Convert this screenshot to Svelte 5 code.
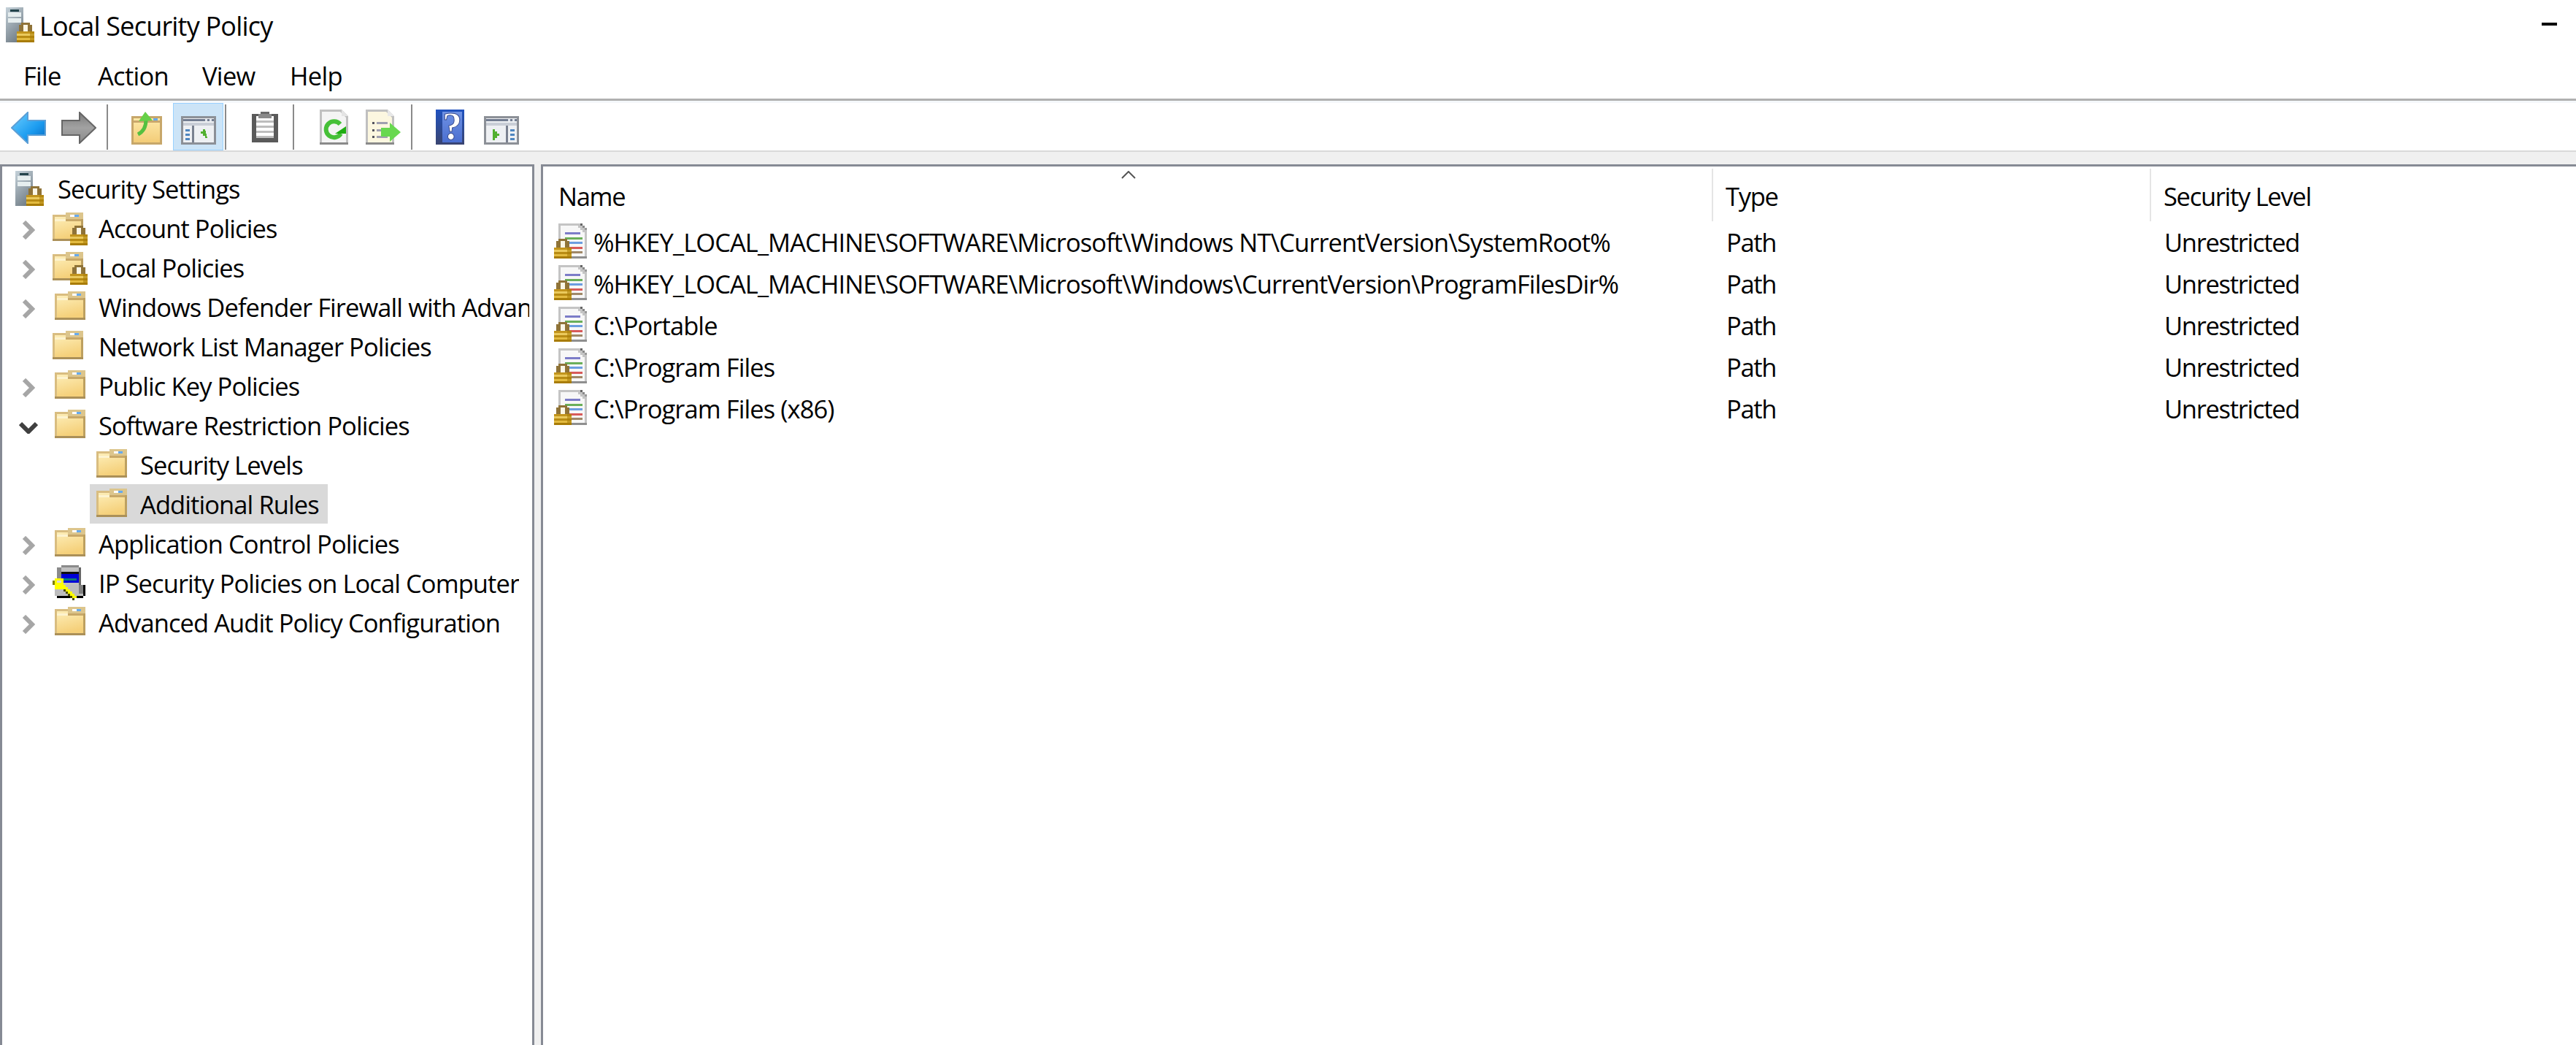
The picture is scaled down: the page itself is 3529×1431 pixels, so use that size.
<script>
  const tree = [
    { label: 'Account Policies', icon: 'lockfolder', arrow: 'closed', nudge: true },
    { label: 'Local Policies', icon: 'lockfolder', arrow: 'closed', nudge: true },
    { label: 'Windows Defender Firewall with Advanced Security', icon: 'folder', arrow: 'closed' },
    { label: 'Network List Manager Policies', icon: 'folder', arrow: null, nudge: true },
    { label: 'Public Key Policies', icon: 'folder', arrow: 'closed' },
    { label: 'Software Restriction Policies', icon: 'folder', arrow: 'open' },
    { label: 'Security Levels', icon: 'folder', child: true },
    { label: 'Additional Rules', icon: 'folder', child: true, selected: true },
    { label: 'Application Control Policies', icon: 'folder', arrow: 'closed' },
    { label: 'IP Security Policies on Local Computer', icon: 'ipsec', arrow: 'closed' },
    { label: 'Advanced Audit Policy Configuration', icon: 'folder', arrow: 'closed' }
  ];

  const rules = [
    '%HKEY_LOCAL_MACHINE\\SOFTWARE\\Microsoft\\Windows NT\\CurrentVersion\\SystemRoot%',
    '%HKEY_LOCAL_MACHINE\\SOFTWARE\\Microsoft\\Windows\\CurrentVersion\\ProgramFilesDir%',
    'C:\\Portable',
    'C:\\Program Files',
    'C:\\Program Files (x86)'
  ];
</script>

{#snippet lock()}
  <svg class="lock" viewBox="0 0 8 9" shape-rendering="crispEdges">
    <path d="M1 4V1h1V0h4v1h1v3H5V1H3v3z" fill="#8f7338" />
    <rect x="3" y="1" width="2" height="3" fill="#fbf6e6" />
    <rect y="4" width="8" height="1" fill="#c2941c" />
    <rect y="5" width="8" height="1" fill="#eac95c" />
    <rect y="6" width="8" height="1" fill="#b98c14" />
    <rect y="7" width="8" height="1" fill="#e3bb40" />
    <rect y="8" width="8" height="1" fill="#a87c08" />
    <rect x="6" y="4" width="2" height="5" fill="#a87c08" opacity="0.55" />
  </svg>
{/snippet}

{#snippet folder()}
  <svg class="folder" viewBox="0 0 14 13" shape-rendering="crispEdges">
    <rect y="1" width="14" height="12" fill="#d9bd80" />
    <rect x="1" y="2" width="12" height="10" fill="url(#folderFill)" />
    <rect x="1" y="3" width="5" height="1" fill="#fdf3cf" />
    <rect x="6" width="8" height="3" fill="#dcc58c" />
    <rect x="6" y="3" width="8" height="1" fill="#c8a868" />
    <rect x="8" y="1" width="2" height="1" fill="#fff" />
    <rect x="10" y="1" width="2" height="1" fill="#66aaee" />
    <rect x="13" y="3" width="1" height="10" fill="#bda060" />
    <rect y="12" width="14" height="1" fill="#ab9058" />
  </svg>
{/snippet}

{#snippet ipsec()}
  <svg class="ipsec" viewBox="0 0 15 16" shape-rendering="crispEdges">
    <rect x="4" width="8" height="1" fill="#8a8a8a" />
    <rect x="2" y="1" width="11" height="10" fill="#c0c0c0" />
    <rect x="2" y="1" width="2" height="9" fill="#8a8a8a" />
    <rect x="12" y="1" width="1" height="9" fill="#666" />
    <rect x="4" y="3" width="8" height="1" fill="#101010" />
    <rect x="4" y="4" width="8" height="4" fill="#0000d8" />
    <rect x="5" y="6" width="2" height="1" fill="#008080" />
    <rect x="7" y="6" width="4" height="1" fill="#107878" />
    <rect x="1" y="9" width="13" height="5" fill="#bdbdbd" />
    <rect x="12" y="9" width="2" height="4" fill="#808080" />
    <rect x="14" y="9" width="1" height="5" fill="#000" />
    <rect x="2" y="14" width="12" height="1" fill="#000" />
    <rect x="1" y="6" width="4" height="5" fill="#ffff00" />
    <rect y="7" width="1" height="2" fill="#808000" />
    <rect x="2" y="7" width="2" height="1" fill="#d8d8d8" />
    <path d="M4 9h2v1h1v1h1v1h1v1h1v1h1v1H9v-1H8v-1H7v-1H6v-1H5v-1H4z" fill="#ffff00" />
    <path d="M5 11h1v1h1v1h1v1h1v1h1v1H9v-1H8v-1H7v-1H6v-1H5z" fill="#4a4a00" />
  </svg>
{/snippet}

{#snippet chevron(kind)}
  {#if kind === 'open'}
    <svg class="chev-open" viewBox="0 0 26 17"><path d="M2 3l11 11L24 3" fill="none" stroke="#404040" stroke-width="6" /></svg>
  {:else if kind === 'closed'}
    <svg class="chev" viewBox="0 0 18 26"><path d="M3 2l11 11L3 24" fill="none" stroke="#a6a6a6" stroke-width="6" /></svg>
  {/if}
{/snippet}

{#snippet paneIcon(flip)}
  <svg class="tb-pane" viewBox="0 0 48 39" shape-rendering="crispEdges">
    <rect width="48" height="39" fill="#8c9097" />
    <rect x="3" y="3" width="42" height="33" fill="#eef0f3" />
    <rect x="3" y="4" width="42" height="3" fill="#727c90" />
    <rect x="33" y="4" width="3" height="3" fill="#dfe3ea" />
    <rect x="39" y="4" width="3" height="3" fill="#dfe3ea" />
    <rect x="3" y="9" width="42" height="4" fill="#c9ced6" />
    {#if flip}
      <rect x="30" y="13" width="3" height="23" fill="#7a8190" />
      <rect x="36" y="18" width="6" height="3" fill="#4f86c0" />
      <rect x="36" y="24" width="6" height="3" fill="#4f86c0" />
      <rect x="36" y="30" width="6" height="3" fill="#4f86c0" />
      <path d="M12 18h3v3h3v3h3v3h-3v3h-3v3h-3z" fill="#52b030" />
    {:else}
      <rect x="15" y="13" width="3" height="23" fill="#7a8190" />
      <rect x="6" y="18" width="6" height="3" fill="#4f86c0" />
      <rect x="6" y="24" width="6" height="3" fill="#4f86c0" />
      <rect x="6" y="30" width="6" height="3" fill="#4f86c0" />
      <path d="M33 18h-3v3h-3v3h3v3h3v3h3z" fill="#52b030" />
    {/if}
  </svg>
{/snippet}

<svg class="defs" width="0" height="0">
  <defs>
    <linearGradient id="folderFill" x1="0" y1="0" x2="0.3" y2="1">
      <stop offset="0" stop-color="#fdeeb8" />
      <stop offset="1" stop-color="#f5d07a" />
    </linearGradient>
    <linearGradient id="blueArrow" x1="0" y1="0" x2="1" y2="1">
      <stop offset="0" stop-color="#6fd0ff" />
      <stop offset="0.6" stop-color="#1c9cf0" />
      <stop offset="1" stop-color="#0668c0" />
    </linearGradient>
    <linearGradient id="greyArrow" x1="0" y1="0" x2="0" y2="1">
      <stop offset="0" stop-color="#7a7a7a" />
      <stop offset="0.5" stop-color="#a2a2a2" />
      <stop offset="1" stop-color="#8a8a8a" />
    </linearGradient>
    <linearGradient id="helpFill" x1="0" y1="0" x2="0" y2="1">
      <stop offset="0" stop-color="#1f52c0" />
      <stop offset="1" stop-color="#3a4470" />
    </linearGradient>
    <linearGradient id="helpInner" x1="0" y1="0" x2="0" y2="1">
      <stop offset="0" stop-color="#6f92e4" />
      <stop offset="1" stop-color="#4a6ed0" />
    </linearGradient>
    <linearGradient id="serverFill" x1="0" y1="0" x2="0.5" y2="1">
      <stop offset="0" stop-color="#c5d2da" />
      <stop offset="1" stop-color="#75818a" />
    </linearGradient>
    <linearGradient id="upFolder" x1="0" y1="0" x2="0" y2="1">
      <stop offset="0" stop-color="#fde9a8" />
      <stop offset="1" stop-color="#f3cc78" />
    </linearGradient>
  </defs>
</svg>

<div class="window">
  <div class="titlebar">
    <span class="app-icon">
      <svg class="server" viewBox="0 0 24 48" shape-rendering="crispEdges">
        <rect width="24" height="48" fill="url(#serverFill)" />
        <rect x="6" y="3" width="12" height="3" fill="#24444c" />
        <rect x="3" y="7" width="18" height="6" fill="#e6eeef" />
        <rect x="3" y="15" width="18" height="6" fill="#e6eeef" />
      </svg>
      {@render lock()}
    </span>
    <span class="title">Local Security Policy</span>
    <span class="minimize"></span>
  </div>

  <div class="menubar">
    <span class="menu-file">File</span>
    <span class="menu-action">Action</span>
    <span class="menu-view">View</span>
    <span>Help</span>
  </div>

  <div class="toolbar">
    <svg class="tb-back" viewBox="0 0 48 44">
      <path d="M1 22 23 1v11h24v20H23v11z" fill="url(#blueArrow)" stroke="#5c9fd6" stroke-width="2" />
    </svg>
    <svg class="tb-forward" viewBox="0 0 48 44">
      <path d="M47 22 25 1v11H1v20h24v11z" fill="url(#greyArrow)" stroke="#666" stroke-width="2" />
    </svg>
    <span class="sep sep-a"></span>
    <svg class="tb-up" viewBox="0 0 42 45">
      <rect y="6" width="42" height="39" fill="#c7a76a" />
      <rect x="3" y="9" width="36" height="33" fill="url(#upFolder)" />
      <rect x="3" y="12" width="36" height="3" fill="#caa86c" />
      <rect x="30" y="9" width="6" height="3" fill="#66aaee" />
      <path d="M9 31c8-4 11-10 11-20" fill="none" stroke="#55c040" stroke-width="5" />
      <path d="M19 0l10 12-19 1z" fill="#66d048" />
    </svg>
    <div class="tb-active">
      {@render paneIcon(false)}
    </div>
    <span class="sep sep-b"></span>
    <svg class="tb-clip" viewBox="0 0 36 42" shape-rendering="crispEdges">
      <rect y="3" width="36" height="39" fill="#5a5a5a" />
      <rect x="6" y="6" width="24" height="30" fill="#fff" />
      <rect x="12" width="12" height="3" fill="#6a6a6a" />
      <rect x="9" y="3" width="18" height="6" fill="#8a8a8a" />
      <rect x="6" y="12" width="24" height="3" fill="#bdbdbd" />
      <rect x="6" y="19" width="24" height="3" fill="#bdbdbd" />
      <rect x="6" y="26" width="24" height="3" fill="#bdbdbd" />
      <rect x="6" y="33" width="24" height="3" fill="#bdbdbd" />
    </svg>
    <span class="sep sep-c"></span>
    <svg class="tb-refresh" viewBox="0 0 39 48">
      <path d="M0 0h30l9 9v39H0z" fill="#c0c0c0" />
      <path d="M3 3h25l8 8v34H3z" fill="#f4f4f4" />
      <rect y="45" width="39" height="3" fill="#8a8a8a" />
      <path d="M30 0l9 9h-9z" fill="#e4e4e4" />
      <path d="M28 20A11 11 0 1 0 29 33" fill="none" stroke="#46c038" stroke-width="6" />
      <path d="M21 33h15v-10z" fill="#1fae12" />
    </svg>
    <svg class="tb-export" viewBox="0 0 48 48">
      <path d="M0 0h30l9 9v39H0z" fill="#c0c0c0" />
      <path d="M3 3h25l8 8v34H3z" fill="#fcf7e0" />
      <rect y="45" width="39" height="3" fill="#8a8a8a" />
      <path d="M30 0l9 9h-9z" fill="#e8e8e8" />
      <g fill="#55555f">
        <rect x="9" y="17" width="3" height="3" />
        <rect x="9" y="27" width="3" height="3" />
        <rect x="9" y="36" width="3" height="3" />
      </g>
      <g fill="#a0a0b0">
        <rect x="15" y="17" width="15" height="3" />
        <rect x="15" y="27" width="15" height="3" />
        <rect x="15" y="36" width="15" height="3" />
      </g>
      <path d="M21 25h12v-7l15 13-15 13v-7H21z" fill="#68d850" />
    </svg>
    <span class="sep sep-d"></span>
    <svg class="tb-help" viewBox="0 0 39 48">
      <rect width="39" height="48" fill="url(#helpFill)" />
      <rect x="9" y="3" width="27" height="42" fill="url(#helpInner)" />
      <text x="22" y="41" class="help-mark">?</text>
    </svg>
    <span class="tb-console">
      {@render paneIcon(true)}
    </span>
  </div>

  <div class="panes">
    <div class="tree">
      <div class="tree-row root">
        <span class="root-icon">
          <svg class="server" viewBox="0 0 24 48" shape-rendering="crispEdges">
            <rect width="24" height="48" fill="url(#serverFill)" />
            <rect x="6" y="3" width="12" height="3" fill="#24444c" />
            <rect x="3" y="7" width="18" height="6" fill="#e6eeef" />
            <rect x="3" y="15" width="18" height="6" fill="#e6eeef" />
          </svg>
          {@render lock()}
        </span>
        <span class="label">Security Settings</span>
      </div>
      {#each tree as item}
        <div class="tree-row" class:child={item.child} class:selected={item.selected}>
          {#if !item.child}
            <span class="arrow">{@render chevron(item.arrow)}</span>
          {/if}
          <span class="node-icon" class:nudge={item.nudge}>
            {#if item.icon === 'ipsec'}
              {@render ipsec()}
            {:else}
              {@render folder()}
              {#if item.icon === 'lockfolder'}{@render lock()}{/if}
            {/if}
          </span>
          <span class="label">{item.label}</span>
        </div>
      {/each}
    </div>

    <div class="list">
      <div class="list-grid">
        <div class="head head-name">
          <svg class="sort" viewBox="0 0 20 11"><path d="M1 10l9-9 9 9" fill="none" stroke="#555" stroke-width="2" /></svg>
          Name
        </div>
        <div class="head">Type</div>
        <div class="head">Security Level</div>
        {#each rules as rule}
          <div class="cell cell-name">
            <span class="doc-icon">
              <svg class="doc" viewBox="0 0 39 48" shape-rendering="crispEdges">
                <path d="M0 0h30v3h3v3h3v3h3v39H0z" fill="#c4c4c4" />
                <path d="M3 3h24v3h3v3h3v3h3v33H3z" fill="#f7f7f7" />
                <rect y="45" width="39" height="3" fill="#8f8f8f" />
                <rect x="30" width="3" height="3" fill="#666" />
                <rect x="33" y="3" width="3" height="3" fill="#888" />
                <rect x="36" y="6" width="3" height="3" fill="#999" />
                <rect x="9" y="12" width="21" height="3" fill="#7c7cc8" />
                <rect x="9" y="19" width="24" height="3" fill="#6aaf5a" />
                <rect x="15" y="25" width="18" height="3" fill="#6c9de0" />
                <rect x="15" y="32" width="18" height="3" fill="#d85a5a" />
                <rect x="15" y="38" width="18" height="3" fill="#a08868" />
              </svg>
              {@render lock()}
            </span>
            <span>{rule}</span>
          </div>
          <div class="cell cell-pad">Path</div>
          <div class="cell cell-pad">Unrestricted</div>
        {/each}
      </div>
    </div>
  </div>
</div>

<style>
  :global(body) { margin: 0; background: #fff; }

  .defs { position: absolute; }
  svg { display: block; flex-shrink: 0; }

  .window {
    height: 100vh; overflow: hidden;
    display: flex; flex-direction: column;
    font-family: "Open Sans", "Liberation Sans", sans-serif;
    font-size: 34.5px; letter-spacing: -0.92px; color: #000;
    background: #fff;
  }

  /* Title and menu */
  .titlebar { height: 72px; display: flex; align-items: center; padding-left: 8px; flex-shrink: 0; }
  .app-icon { position: relative; width: 39px; height: 48px; margin-top: -4px; margin-right: 7px; }
  .title { margin-top: -2px; font-size: 36px; letter-spacing: -0.8px; }
  .minimize { width: 21px; height: 4px; background: #000; margin-left: auto; margin-right: 26px; margin-top: -6px; }

  .menubar {
    height: 63px; display: flex; align-items: center; padding-left: 32px;
    border-bottom: 3px solid #b0b0b0; flex-shrink: 0; letter-spacing: -0.7px;
  }
  .menu-file { width: 102px; }
  .menu-action { width: 143px; }
  .menu-view { width: 120px; }

  /* Toolbar */
  .toolbar {
    height: 65px; display: flex; align-items: flex-start; padding-left: 15px;
    border-top: 3px solid #f5f8fb; border-bottom: 2px solid #d9d9d9;
    flex-shrink: 0;
  }
  .sep { width: 2px; height: 62px; background: #8a8a8a; margin-top: 2px; }
  .sep-a { margin-left: 14px; }
  .sep-b { margin-left: 2px; }
  .sep-c { margin-left: 20px; }
  .sep-d { margin-left: 14px; }
  .tb-back { width: 48px; height: 44px; margin-top: 12px; }
  .tb-forward { width: 48px; height: 44px; margin-top: 12px; margin-left: 21px; }
  .tb-up { width: 42px; height: 45px; margin-top: 12px; margin-left: 32px; }
  .tb-active {
    width: 69px; height: 65px; box-sizing: border-box; margin-left: 15px;
    background: #cce4f7; border: 1px solid #99d1ff;
    display: flex; justify-content: center; padding-top: 17px;
  }
  .tb-pane { width: 48px; height: 39px; }
  .tb-clip { width: 36px; height: 42px; margin-top: 12px; margin-left: 35px; }
  .tb-refresh { width: 39px; height: 48px; margin-top: 9px; margin-left: 35px; }
  .tb-export { width: 48px; height: 48px; margin-top: 9px; margin-left: 24px; }
  .tb-help { width: 39px; height: 48px; margin-top: 9px; margin-left: 32px; }
  .tb-console { margin-top: 18px; margin-left: 27px; }
  .help-mark {
    font-family: "Liberation Serif", serif; font-size: 54px; font-weight: 700;
    fill: #fff; text-anchor: middle; stroke: #3a4c90; stroke-width: 1px;
  }

  /* Panes */
  .panes {
    flex: 1; min-height: 0; display: flex; gap: 9px;
    background: #f0f0f0; padding-top: 17px;
  }

  .tree {
    width: 732px; box-sizing: border-box; flex-shrink: 0; padding-top: 3px;
    background: #fff; border: 3px solid #868a94; border-bottom: 0;
  }
  .tree-row {
    height: 54px; display: flex; align-items: center; padding-right: 4px;
    box-sizing: border-box;
  }
  .tree-row.root { padding-left: 18px; }
  .tree-row.child { margin-left: 120px; padding-left: 9px; width: fit-content; padding-right: 12px; }
  .tree-row.selected { background: #d9d9d9; }
  .arrow { width: 72px; display: flex; justify-content: center; flex-shrink: 0; }
  .chev { width: 18px; height: 26px; margin-top: 6px; }
  .chev-open { width: 26px; height: 17px; margin-top: 6px; }

  .root-icon { position: relative; width: 39px; height: 48px; margin-right: 19px; flex-shrink: 0; }
  .node-icon { position: relative; width: 42px; height: 39px; margin-top: -3px; margin-right: 18px; flex-shrink: 0; }
  .node-icon.nudge { margin-left: -3px; margin-right: 21px; }
  .folder { width: 42px; height: 39px; }
  .ipsec { width: 45px; height: 48px; margin-top: -3px; margin-left: -3px; }
  .label { white-space: nowrap; overflow: hidden; min-width: 0; }

  .lock { position: absolute; width: 24px; height: 27px; }
  .node-icon .lock { left: 24px; top: 18px; }
  .root-icon .lock, .app-icon .lock { left: 15px; top: 21px; }
  .server { width: 24px; height: 48px; }

  /* Details list */
  .list {
    flex: 1; min-width: 0; background: #fff;
    border-top: 3px solid #868a94; border-left: 3px solid #868a94;
  }
  .list-grid { display: grid; grid-template-columns: 1601px 600px 1fr; }
  .head {
    height: 72px; margin-top: 3px; box-sizing: border-box; padding: 2px 0 0 17px;
    display: flex; align-items: center; letter-spacing: -1.3px;
    border-left: 2px solid #e5e5e5;
  }
  .head-name { border-left: 0; padding-left: 21px; position: relative; }
  .sort { position: absolute; left: 792px; top: 3px; width: 20px; height: 11px; }
  .cell { height: 57px; display: flex; align-items: center; white-space: nowrap; }
  .cell-name { padding-left: 15px; }
  .cell-pad { padding-left: 20px; letter-spacing: -1.3px; }
  .doc-icon { position: relative; width: 45px; height: 48px; margin-right: 9px; flex-shrink: 0; margin-top: -4px; }
  .doc { width: 39px; height: 48px; margin-left: 6px; }
  .doc-icon .lock { left: 0; top: 21px; }
</style>
